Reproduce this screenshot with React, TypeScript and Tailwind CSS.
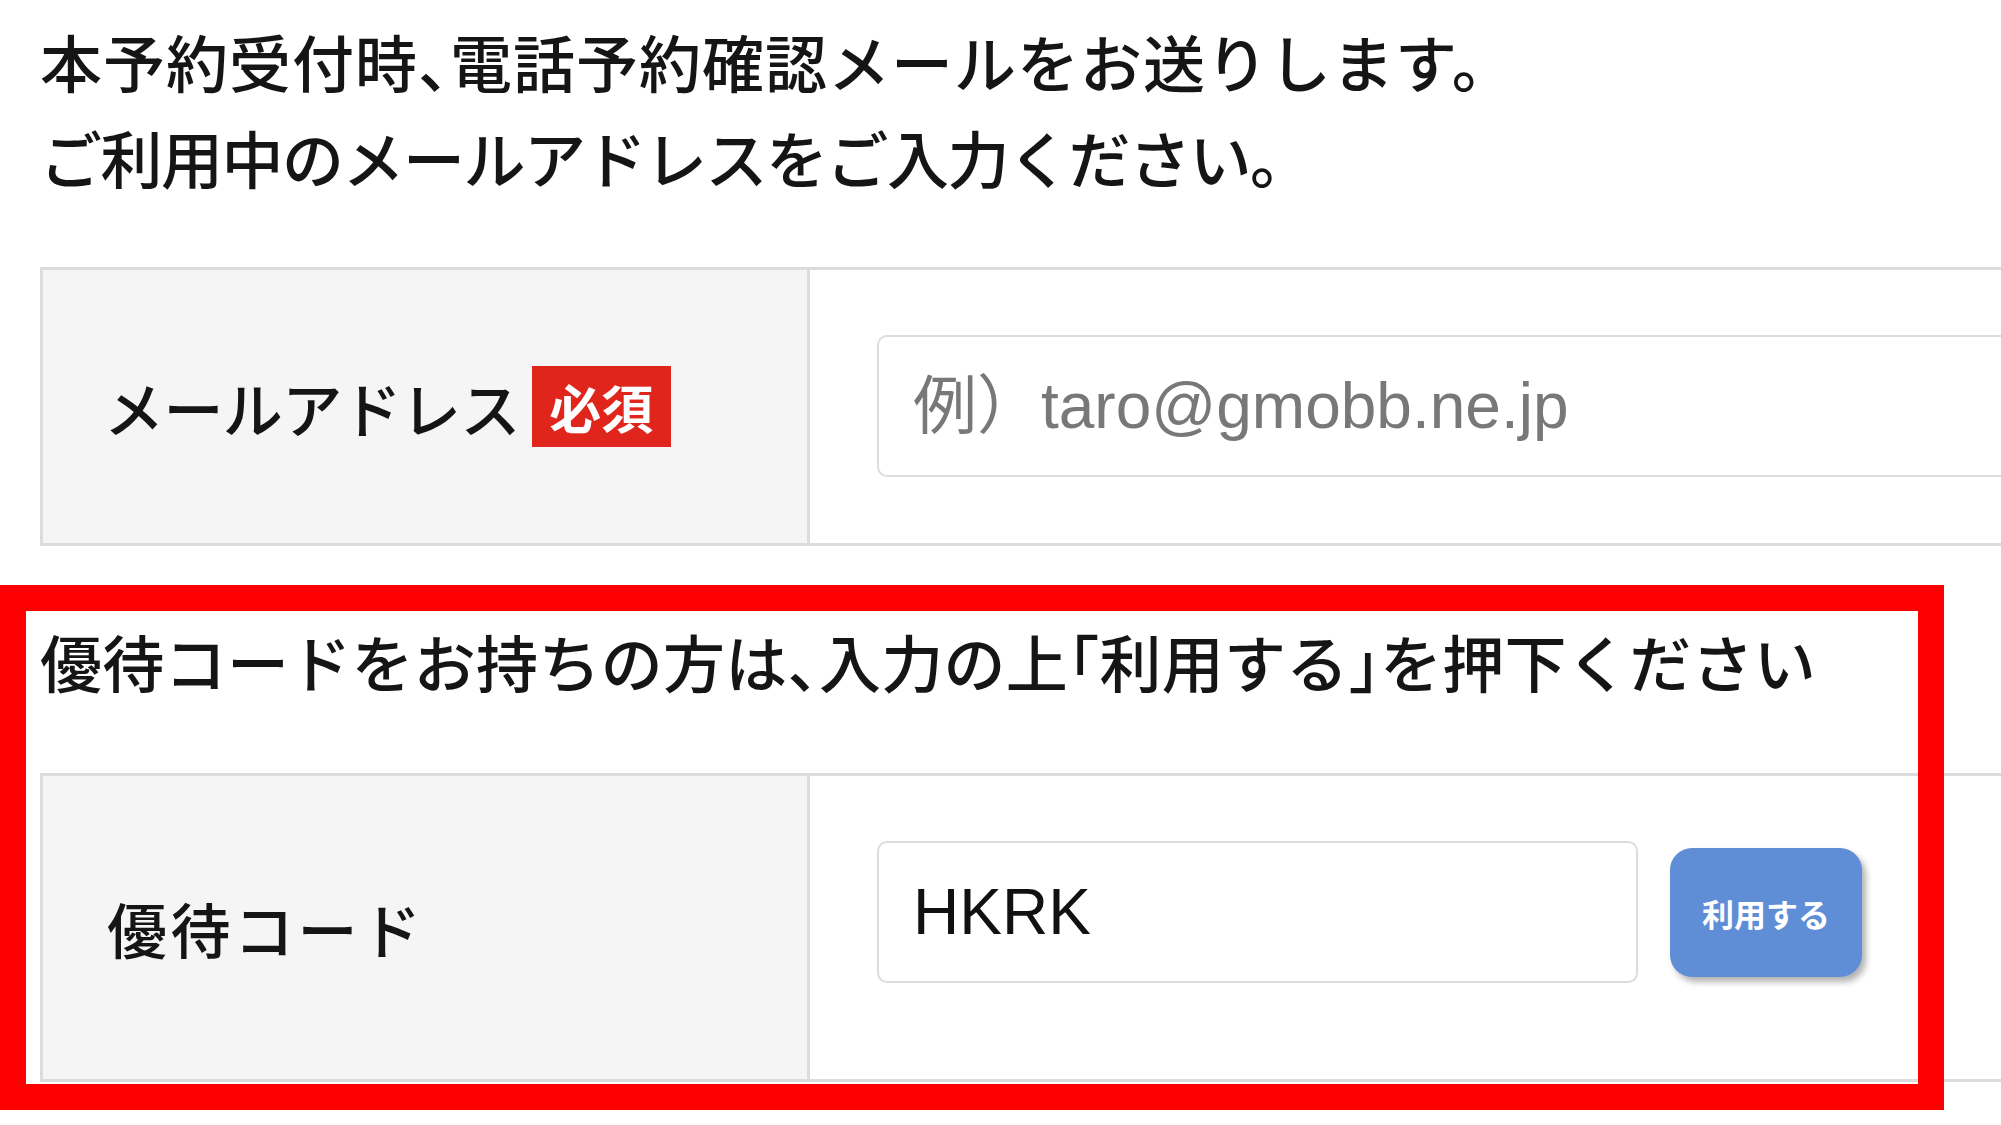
import React from "react";

const JP = '"Noto Sans CJK JP", "Noto Sans", sans-serif';
const MIX = '"Liberation Sans", "Noto Sans CJK JP", Arial, sans-serif';

function H({ children }: { children: React.ReactNode }) {
  return <span className="[font-feature-settings:'halt']">{children}</span>;
}

export default function App() {
  return (
    <div
      className="relative w-[2001px] h-[1125px] overflow-hidden bg-white text-[#151515]"
      style={{ fontFamily: JP }}
    >
      <div className="w-[2400px] pl-[40px] pt-[13px]">
        <p className="text-[62px] leading-[96px] font-medium tracking-[1px] whitespace-nowrap">
          本予約受付時<H>、</H>電話予約確認メールをお送りします。
        </p>
        <p className="text-[62px] leading-[96px] font-medium tracking-[-1.5px] whitespace-nowrap">
          ご利用中のメールアドレスをご入力ください。
        </p>

        <div className="mt-[62px] flex h-[279px] border-[3px] border-[#dcdcdc]">
          <div className="flex w-[767px] shrink-0 items-center border-r-[3px] border-[#dcdcdc] bg-[#f5f5f5] pl-[61px]">
            <span className="text-[60px] font-medium leading-none tracking-[-0.6px] whitespace-nowrap">メールアドレス</span>
            <span className="ml-[12px] flex h-[81px] w-[139px] items-center justify-center bg-[#e0261c] text-[52px] font-bold leading-none text-white">
              必須
            </span>
          </div>
          <div className="flex-1 pl-[67px] pt-[65px]">
            <input
              type="text"
              placeholder="例）taro@gmobb.ne.jp"
              className="h-[142px] w-[1600px] rounded-[10px] border-2 border-[#dcdcdc] bg-white pl-[34px] text-[64px] text-[#111] outline-none placeholder:text-[#787878]"
              style={{ fontFamily: MIX }}
            />
          </div>
        </div>

        <p className="mt-[67px] text-[62px] leading-[96px] font-medium tracking-[0.3px] whitespace-nowrap">
          優待コードをお持ちの方は<H>、</H>入力の上<H>「</H>利用する<H>」</H>を押下ください
        </p>

        <div className="mt-[64px] flex h-[309px] border-[3px] border-[#dcdcdc]">
          <div className="flex w-[767px] shrink-0 items-center border-r-[3px] border-[#dcdcdc] bg-[#f5f5f5] pl-[64px]">
            <span className="text-[60px] font-medium leading-none tracking-[3.5px] whitespace-nowrap">優待コード</span>
          </div>
          <div className="flex flex-1 items-start pl-[67px] pt-[65px]">
            <input
              type="text"
              defaultValue="HKRK"
              className="h-[142px] w-[761px] rounded-[10px] border-2 border-[#dcdcdc] bg-white pl-[34px] text-[64px] text-[#111] outline-none"
              style={{ fontFamily: MIX }}
            />
            <button
              type="button"
              className="ml-[32px] mt-[7px] flex h-[129px] w-[192px] items-center justify-center rounded-[22px] bg-[#5f8ed6] text-[32px] font-bold leading-none text-white shadow-[4px_5px_6px_rgba(0,0,0,0.3)]"
            >
              利用する
            </button>
          </div>
        </div>
      </div>

      <div className="pointer-events-none absolute left-0 top-[585px] h-[525px] w-[1944px] border-[26px] border-[#ff0000]" />
    </div>
  );
}
